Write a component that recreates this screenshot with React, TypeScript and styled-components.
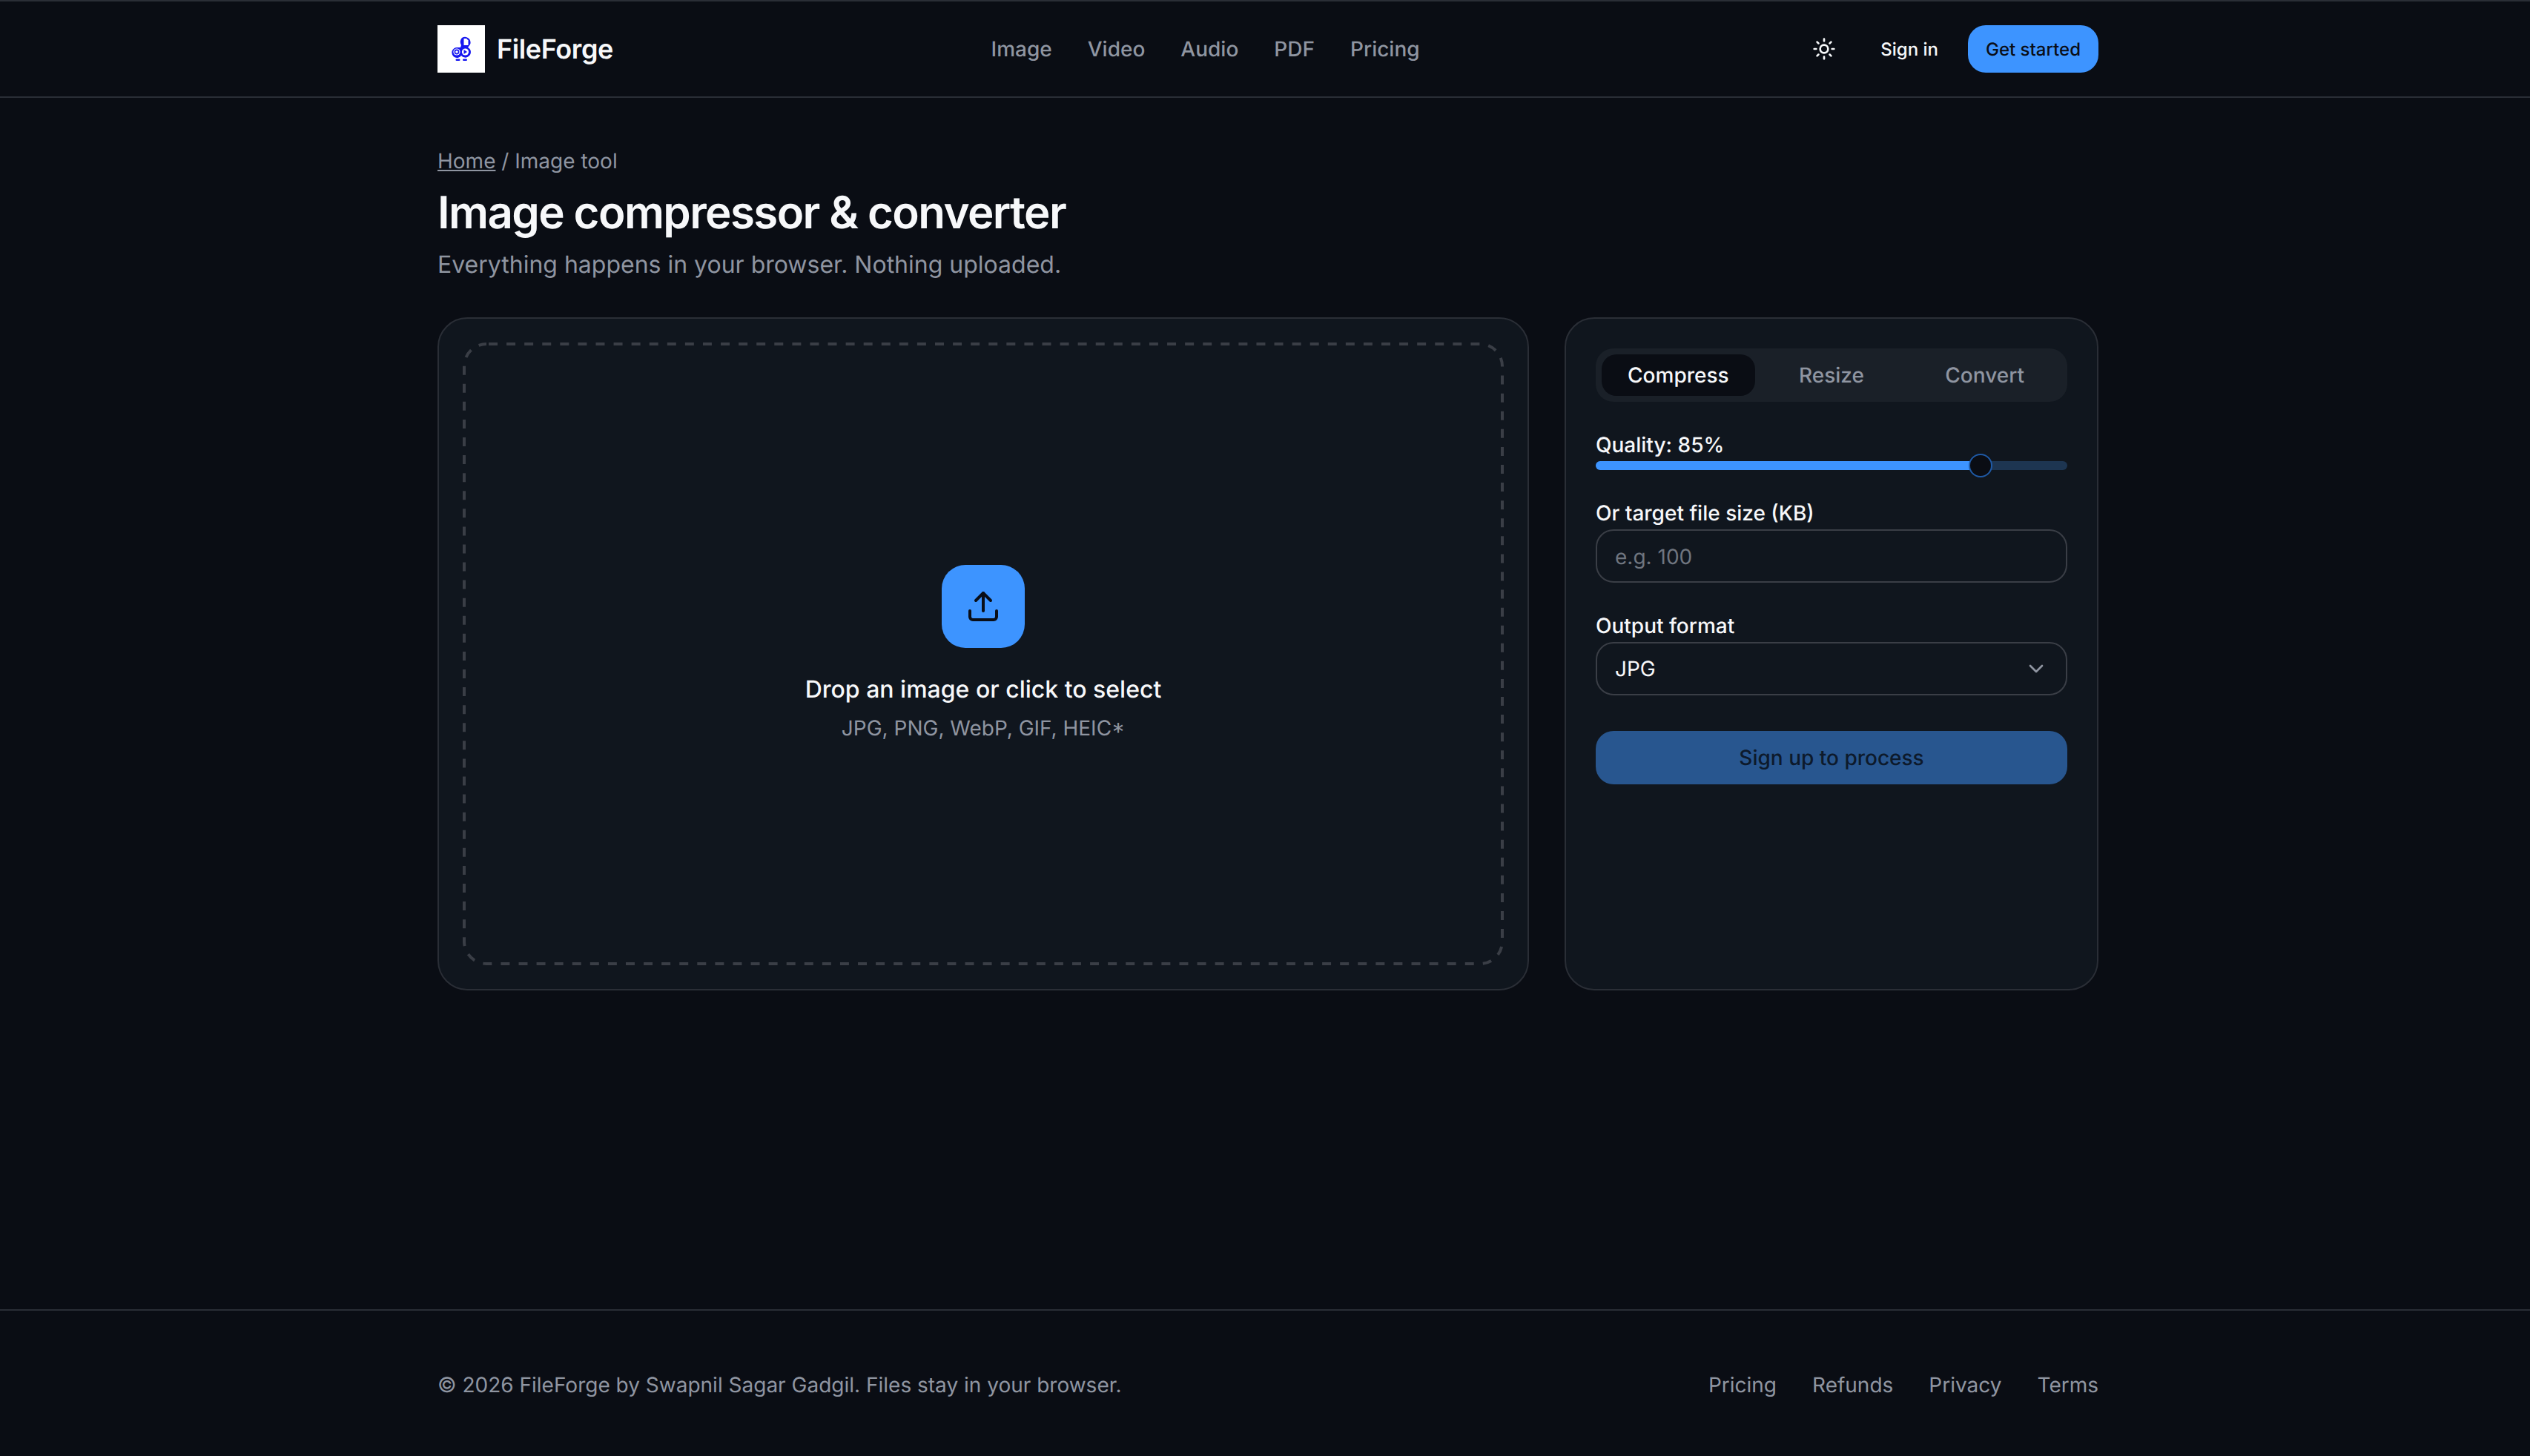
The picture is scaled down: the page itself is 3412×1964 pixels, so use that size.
import React from 'react'
import styled, { createGlobalStyle } from 'styled-components'
import * as Slider from '@radix-ui/react-slider'
import { ChevronDown, Sun, Upload } from 'lucide-react'

const BG = '#0a0d14'
const PANEL = '#10161e'
const LINE = '#2a2e36'
const FIELD_LINE = '#3a3e46'
const TEXT = '#f7f8fa'
const MUTED = '#8f95a1'
const BLUE = '#3d94ff'
const INK = '#0a0e17'

const GlobalStyle = createGlobalStyle`
  * { box-sizing: border-box; }
  html, body { margin: 0; padding: 0; background: ${BG}; }
  body {
    font-family: Inter, "Liberation Sans", sans-serif;
    color: ${TEXT};
    text-rendering: geometricPrecision;
  }
  button, input { text-rendering: geometricPrecision; }
`

const Page = styled.div`
  min-height: 1964px;
  display: flex;
  flex-direction: column;
`

const Container = styled.div`
  width: 2240px;
  margin-left: 590px;
`

const Header = styled.header`
  height: 132px;
  border-top: 2px solid ${LINE};
  border-bottom: 2px solid ${LINE};
`

const HeaderRow = styled(Container)`
  height: 100%;
  display: flex;
  align-items: center;
  justify-content: space-between;
`

const Brand = styled.div`
  display: flex;
  align-items: center;
  gap: 16px;
  font-size: 36px;
  font-weight: 600;
  letter-spacing: -0.4px;
`

const LogoBox = styled.div`
  width: 64px;
  height: 64px;
  background: #fff;
  display: flex;
`

const Nav = styled.nav`
  display: flex;
  gap: 48px;
`

const NavLink = styled.a`
  font-size: 28px;
  font-weight: 500;
  color: ${MUTED};
`

const HeaderActions = styled.div`
  display: flex;
  align-items: center;
  gap: 16px;
`

const ThemeButton = styled.button`
  width: 72px;
  height: 64px;
  border: 0;
  padding: 0;
  background: none;
  color: ${TEXT};
  display: flex;
  align-items: center;
  justify-content: center;
`

const SignIn = styled.a`
  padding: 0 24px;
  font-size: 24px;
  font-weight: 500;
  color: ${TEXT};
`

const GetStarted = styled.a`
  height: 64px;
  padding: 0 24px;
  border-radius: 24px;
  background: ${BLUE};
  color: ${INK};
  font-size: 24px;
  font-weight: 500;
  display: flex;
  align-items: center;
`

const Main = styled(Container)`
  flex: 1;
  padding-top: 64px;
`

const Breadcrumb = styled.div`
  font-size: 28px;
  line-height: 42px;
  color: ${MUTED};

  a {
    color: ${MUTED};
    text-decoration: underline;
  }
`

const Title = styled.h1`
  margin: 13px 0 0;
  font-size: 60px;
  line-height: 72px;
  font-weight: 600;
  letter-spacing: -1.6px;
`

const Subtitle = styled.p`
  margin: 10px 0 0;
  font-size: 32px;
  line-height: 48px;
  color: ${MUTED};
`

const Workspace = styled.div`
  margin-top: 47px;
  display: grid;
  grid-template-columns: 1fr 720px;
  gap: 48px;
`

const Panel = styled.section`
  height: 908px;
  border: 2px solid ${LINE};
  border-radius: 40px;
  background: ${PANEL};
`

const DropPanel = styled(Panel)`
  padding: 32px;
`

const DropZone = styled.div`
  position: relative;
  height: 100%;
  display: flex;
  flex-direction: column;
  align-items: center;
  justify-content: center;
`

const DashedOutline = styled.svg`
  position: absolute;
  inset: 0;
  width: 1404px;
  height: 840px;
  fill: none;
  stroke: ${FIELD_LINE};
  stroke-width: 4;
  stroke-dasharray: 12 12.08;
  stroke-dashoffset: -3;
`

const UploadBadge = styled.div`
  width: 112px;
  height: 112px;
  border-radius: 32px;
  background: ${BLUE};
  color: ${INK};
  display: flex;
  align-items: center;
  justify-content: center;
`

const DropTitle = styled.div`
  margin-top: 32px;
  font-size: 32px;
  line-height: 48px;
  font-weight: 500;
`

const DropHint = styled.div`
  margin-top: 8px;
  font-size: 28px;
  line-height: 40px;
  color: ${MUTED};
  font-feature-settings: "case";
`

const SidePanel = styled(Panel)`
  padding: 40px;
  display: flex;
  flex-direction: column;
  gap: 44px;
`

const Tabs = styled.div`
  height: 72px;
  padding: 8px;
  border-radius: 24px;
  background: #1a2028;
  display: grid;
  grid-template-columns: repeat(3, 1fr);
`

const Tab = styled.button<{ $active?: boolean }>`
  border: 0;
  border-radius: 20px;
  font: 500 28px Inter, sans-serif;
  color: ${p => (p.$active ? TEXT : MUTED)};
  background: ${p => (p.$active ? BG : 'transparent')};
`

const Label = styled.label`
  display: block;
  margin-bottom: 8px;
  font-size: 28px;
  line-height: 28px;
  font-weight: 500;
`

const SliderRoot = styled(Slider.Root)`
  position: relative;
  height: 12px;
  display: flex;
  align-items: center;
`

const SliderTrack = styled(Slider.Track)`
  position: relative;
  flex: 1;
  height: 12px;
  border-radius: 6px;
  overflow: hidden;
  background: #1d3551;
`

const SliderRange = styled(Slider.Range)`
  position: absolute;
  height: 100%;
  background: ${BLUE};
`

const SliderThumb = styled(Slider.Thumb)`
  display: block;
  width: 32px;
  height: 32px;
  border-radius: 50%;
  border: 2px solid #1f5aa6;
  background: ${BG};
`

const TextInput = styled.input`
  width: 100%;
  height: 72px;
  padding: 2px 24px 0;
  border: 2px solid ${FIELD_LINE};
  border-radius: 24px;
  background: transparent;
  color: ${TEXT};
  font: 400 28px Inter, sans-serif;

  &::placeholder {
    color: #6f757f;
    opacity: 1;
  }
`

const SelectBox = styled.button`
  width: 100%;
  height: 72px;
  padding: 0 24px;
  border: 2px solid ${FIELD_LINE};
  border-radius: 24px;
  background: transparent;
  color: ${TEXT};
  font: 400 28px Inter, sans-serif;
  display: flex;
  align-items: center;
  justify-content: space-between;

  svg {
    color: ${MUTED};
  }
`

const SubmitButton = styled.button`
  height: 72px;
  margin-top: 4px;
  border: 0;
  border-radius: 24px;
  background: #28568f;
  color: #0d1a2c;
  font: 500 28px Inter, sans-serif;
`

const Footer = styled.footer`
  border-top: 2px solid ${LINE};
`

const FooterRow = styled(Container)`
  padding: 80px 0 76px;
  display: flex;
  justify-content: space-between;
  font-size: 28px;
  line-height: 40px;
  color: ${MUTED};
`

const FooterLinks = styled.div`
  display: flex;
  gap: 48px;
`

function Logo() {
  return (
    <svg width="64" height="64" viewBox="0 0 64 64" fill="none">
      <path d="M33 17a7.5 7.5 0 0 1 11 9l-3 4a7 7 0 0 1 1 12 7 7 0 0 1-10-1 7 7 0 1 1-5-11h4l1-3a8 8 0 0 1 1-10z" fill="#1616f0" />
      <path d="M35.5 18h3.5l2.5 2.5V27h-6z" fill="#fff" />
      <circle cx="26" cy="36" r="4.6" fill="#fff" />
      <circle cx="26" cy="36" r="2.6" stroke="#1616f0" strokeWidth="1.6" />
      <circle cx="37.5" cy="36" r="4.6" fill="#fff" />
      <path d="M35.5 33l4.5 3-4.5 3z" fill="#1616f0" />
      <rect x="24.5" y="45.5" width="6" height="2.6" rx="1.3" fill="#1616f0" />
      <rect x="34" y="45.5" width="6" height="2.6" rx="1.3" fill="#1616f0" />
    </svg>
  )
}

function App() {
  return (
    <Page>
      <GlobalStyle />
      <Header>
        <HeaderRow>
          <Brand>
            <LogoBox><Logo /></LogoBox>
            FileForge
          </Brand>
          <Nav>
            {['Image', 'Video', 'Audio', 'PDF', 'Pricing'].map(item => (
              <NavLink key={item}>{item}</NavLink>
            ))}
          </Nav>
          <HeaderActions>
            <ThemeButton aria-label="Toggle theme"><Sun size={32} strokeWidth={2} /></ThemeButton>
            <SignIn>Sign in</SignIn>
            <GetStarted>Get started</GetStarted>
          </HeaderActions>
        </HeaderRow>
      </Header>

      <Main>
        <Breadcrumb><a>Home</a> / Image tool</Breadcrumb>
        <Title>Image compressor &amp; converter</Title>
        <Subtitle>Everything happens in your browser. Nothing uploaded.</Subtitle>

        <Workspace>
          <DropPanel>
            <DropZone>
              <DashedOutline viewBox="0 0 1404 840"><rect x="2" y="2" width="1400" height="836" rx="30" /></DashedOutline>
              <UploadBadge><Upload size={48} strokeWidth={2} /></UploadBadge>
              <DropTitle>Drop an image or click to select</DropTitle>
              <DropHint>JPG, PNG, WebP, GIF, HEIC*</DropHint>
            </DropZone>
          </DropPanel>

          <SidePanel>
            <Tabs>
              <Tab $active>Compress</Tab>
              <Tab>Resize</Tab>
              <Tab>Convert</Tab>
            </Tabs>
            <div>
              <Label>Quality: 85%</Label>
              <SliderRoot value={[85]} min={10} max={100}>
                <SliderTrack><SliderRange /></SliderTrack>
                <SliderThumb />
              </SliderRoot>
            </div>
            <div>
              <Label>Or target file size (KB)</Label>
              <TextInput placeholder="e.g. 100" />
            </div>
            <div>
              <Label>Output format</Label>
              <SelectBox>JPG<ChevronDown size={32} strokeWidth={2} /></SelectBox>
            </div>
            <SubmitButton>Sign up to process</SubmitButton>
          </SidePanel>
        </Workspace>
      </Main>

      <Footer>
        <FooterRow>
          <span>© 2026 FileForge by Swapnil Sagar Gadgil. Files stay in your browser.</span>
          <FooterLinks>
            <span>Pricing</span>
            <span>Refunds</span>
            <span>Privacy</span>
            <span>Terms</span>
          </FooterLinks>
        </FooterRow>
      </Footer>
    </Page>
  )
}

export default App
